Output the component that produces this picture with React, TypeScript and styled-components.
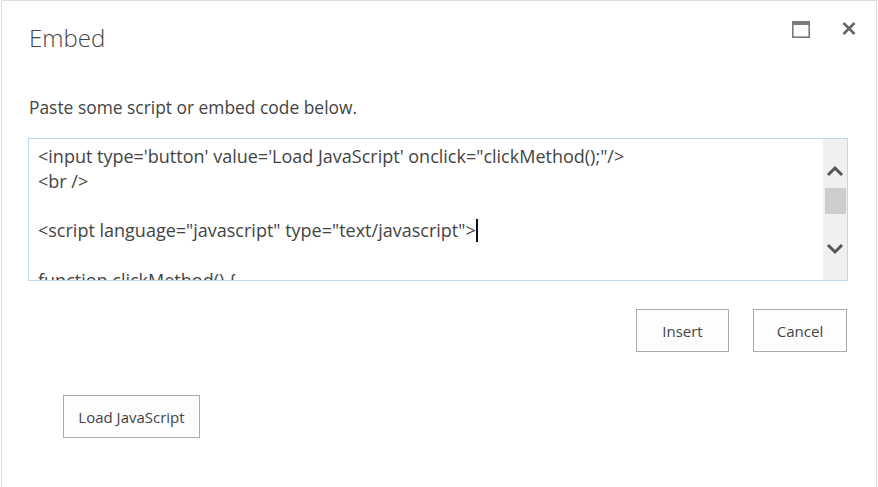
import React from 'react';
import styled, { createGlobalStyle } from 'styled-components';

const GlobalStyle = createGlobalStyle`
  html, body {
    margin: 0;
    padding: 0;
    background: #ffffff;
  }
  body {
    font-family: "Open Sans", "Liberation Sans", sans-serif;
    color: #444444;
  }
`;

const Page = styled.div`
  width: 878px;
  height: 487px;
  overflow: hidden;
  padding-left: 1px;
  box-sizing: border-box;
`;

const Dialog = styled.div`
  width: 876px;
  height: 500px;
  box-sizing: border-box;
  border: 1px solid #dcdcdc;
  padding: 0 28px 0 26px;
  display: flex;
  flex-direction: column;
`;

const Header = styled.div`
  display: flex;
  align-items: flex-start;
  justify-content: space-between;
  padding-top: 21px;
`;

const Title = styled.h1`
  margin: 0 0 0 1px;
  font-size: 24px;
  font-weight: 300;
  line-height: 32px;
  color: #444444;
`;

const WindowButtons = styled.div`
  display: flex;
  align-items: flex-start;
  gap: 31px;
  margin-right: -9px;
`;

const IconButton = styled.button<{ $top: number }>`
  border: 0;
  background: transparent;
  padding: 0;
  margin-top: ${({ $top }) => $top}px;
  display: flex;
  cursor: pointer;
`;

const Intro = styled.p`
  margin: 42px 0 0 1px;
  font-size: 17.4px;
  line-height: 22px;
  color: #444444;
`;

const CodeBox = styled.div`
  margin-top: 20px;
  height: 143px;
  box-sizing: border-box;
  border: 1px solid #bcd8ec;
  display: flex;
  overflow: hidden;
`;

const CodeText = styled.div`
  flex: 1;
  padding: 5px 9px 0;
  font-size: 18px;
  line-height: 24.7px;
  color: #444444;
  white-space: pre;
  overflow: hidden;
`;

const Caret = styled.span`
  display: inline-block;
  width: 0;
  height: 23px;
  border-left: 2px solid #111111;
  vertical-align: -5px;
  margin-left: 0;
`;

const ScrollTrack = styled.div`
  width: 24px;
  background: #f0f0f0;
  display: flex;
  flex-direction: column;
  align-items: center;
  padding-top: 26px;
`;

const ScrollThumb = styled.div`
  width: 21px;
  height: 26px;
  background: #cdcdcd;
  margin: 11px 0 29px;
`;

const Actions = styled.div`
  display: flex;
  justify-content: flex-end;
  gap: 24px;
  margin-top: 28px;
  margin-right: 1px;
`;

const Button = styled.button<{ $width: number }>`
  width: ${({ $width }) => $width}px;
  height: 43px;
  box-sizing: border-box;
  border: 1px solid #ababab;
  background: #fdfdfd;
  font-family: "Open Sans", "Liberation Sans", sans-serif;
  font-size: 15px;
  color: #444444;
  padding: 0;
  cursor: pointer;
`;

const Content = styled.div`
  margin-top: 43px;
  padding-left: 35px;
`;

const MaximizeIcon = () => (
  <svg width="18" height="17" viewBox="0 0 18 17">
    <rect x="0.8" y="0.8" width="16.4" height="15.4" fill="none" stroke="#7a7a7a" strokeWidth="1.6" />
    <rect x="0" y="0" width="18" height="4" fill="#7a7a7a" />
  </svg>
);

const CloseIcon = () => (
  <svg width="16" height="15" viewBox="0 0 16 15">
    <path d="M2.5 2 L13.5 13 M13.5 2 L2.5 13" stroke="#666" strokeWidth="2.6" />
  </svg>
);

const ChevronUp = () => (
  <svg width="18" height="12" viewBox="0 0 18 12">
    <path d="M2 10 L9 3 L16 10" fill="none" stroke="#555" strokeWidth="3" />
  </svg>
);

const ChevronDown = () => (
  <svg width="18" height="12" viewBox="0 0 18 12">
    <path d="M2 2 L9 9 L16 2" fill="none" stroke="#555" strokeWidth="3" />
  </svg>
);

const lines = [
  `<input type='button' value='Load JavaScript' onclick="clickMethod();"/>`,
  `<br />`,
  ``,
];

export default function App() {
  return (
    <Page>
      <GlobalStyle />
      <Dialog>
        <Header>
          <Title>Embed</Title>
          <WindowButtons>
            <IconButton $top={-1} aria-label="Maximize"><MaximizeIcon /></IconButton>
            <IconButton $top={-1} aria-label="Close"><CloseIcon /></IconButton>
          </WindowButtons>
        </Header>
        <Intro>Paste some script or embed code below.</Intro>
        <CodeBox>
          <CodeText>
            {lines.map((l, i) => (
              <div key={i}>{l || '\u00a0'}</div>
            ))}
            <div>
              {`<script language="javascript" type="text/javascript">`}
              <Caret />
            </div>
            <div>{'\u00a0'}</div>
            <div>{`function clickMethod() {`}</div>
          </CodeText>
          <ScrollTrack>
            <ChevronUp />
            <ScrollThumb />
            <ChevronDown />
          </ScrollTrack>
        </CodeBox>
        <Actions>
          <Button $width={93}>Insert</Button>
          <Button $width={94}>Cancel</Button>
        </Actions>
        <Content>
          <Button $width={137}>Load JavaScript</Button>
        </Content>
      </Dialog>
    </Page>
  );
}
